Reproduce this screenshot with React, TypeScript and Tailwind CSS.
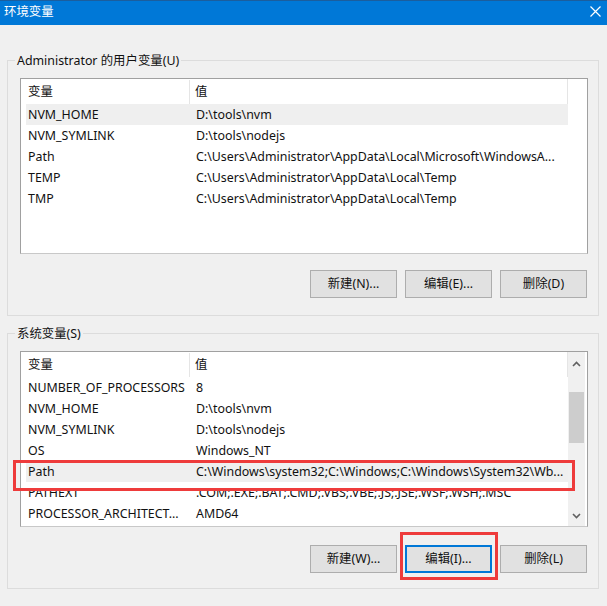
import { ReactNode } from "react";

type Row = { name: string; value: string; selected?: boolean };

const USER_VARS: Row[] = [
  { name: "NVM_HOME", value: "D:\\tools\\nvm", selected: true },
  { name: "NVM_SYMLINK", value: "D:\\tools\\nodejs" },
  { name: "Path", value: "C:\\Users\\Administrator\\AppData\\Local\\Microsoft\\WindowsA..." },
  { name: "TEMP", value: "C:\\Users\\Administrator\\AppData\\Local\\Temp" },
  { name: "TMP", value: "C:\\Users\\Administrator\\AppData\\Local\\Temp" },
];

const SYSTEM_VARS: Row[] = [
  { name: "NUMBER_OF_PROCESSORS", value: "8" },
  { name: "NVM_HOME", value: "D:\\tools\\nvm" },
  { name: "NVM_SYMLINK", value: "D:\\tools\\nodejs" },
  { name: "OS", value: "Windows_NT" },
  { name: "Path", value: "C:\\Windows\\system32;C:\\Windows;C:\\Windows\\System32\\Wb...", selected: true },
  { name: "PATHEXT", value: ".COM;.EXE;.BAT;.CMD;.VBS;.VBE;.JS;.JSE;.WSF;.WSH;.MSC" },
  { name: "PROCESSOR_ARCHITECT...", value: "AMD64" },
];

const FONT = "font-['Segoe_UI','Noto_Sans','Noto_Sans_CJK_SC',sans-serif]";

function GroupBox({ label, children }: { label: string; children: ReactNode }) {
  return (
    <div className="relative border border-[#dcdcdc] pl-[12px] pr-[10px] pt-[17px]">
      <span className="absolute left-[7px] top-[-9px] bg-[#f0f0f0] px-[2px] leading-[17px]">{label}</span>
      {children}
    </div>
  );
}

function VarList({ rows, scroll }: { rows: Row[]; scroll?: boolean }) {
  return (
    <div className="flex h-[176px] border border-[#a0a0a0] border-b-[#c8c8c8] bg-white">
      <div className="flex w-[547px] flex-col">
        <div className="flex h-[25px] shrink-0 items-center border-r border-[#e5e5e5] pt-[1px]">
          <div className="w-[169px] border-r border-[#e5e5e5] pl-[7px] leading-[24px]">变量</div>
          <div className="pl-[5px]">值</div>
        </div>
        {rows.map((r) => (
          <div
            key={r.name}
            className={
              "ml-[5px] flex h-[21px] shrink-0 items-center whitespace-nowrap pt-[1px] " +
              (r.selected ? "bg-[#efefef]" : "")
            }
          >
            <div className="w-[164px] overflow-hidden pl-[2px]">{r.name}</div>
            <div className="flex-1 overflow-hidden pl-[6px]">{r.value}</div>
          </div>
        ))}
      </div>
      {scroll ? (
        <div className="flex w-[17px] flex-col items-center bg-[#f0f0f0]">
          <div className="flex h-[24px] w-full items-center justify-center">
            <svg width="9" height="6" viewBox="0 0 9 6">
              <path d="M1 5 L4.5 1.5 L8 5" fill="none" stroke="#606060" strokeWidth="1.6" />
            </svg>
          </div>
          <div className="mt-[16px] h-[51px] w-[15px] bg-[#cdcdcd]" />
          <div className="flex-1" />
          <div className="flex h-[20px] w-full items-center justify-center">
            <svg width="9" height="6" viewBox="0 0 9 6">
              <path d="M1 1 L4.5 4.5 L8 1" fill="none" stroke="#606060" strokeWidth="1.6" />
            </svg>
          </div>
        </div>
      ) : (
        <div className="flex-1" />
      )}
    </div>
  );
}

function Btn({ children, focused }: { children: ReactNode; focused?: boolean }) {
  return (
    <div
      className={
        "flex h-[28px] w-[87px] items-center justify-center bg-[#e1e1e1] " +
        (focused ? "border-2 border-[#0078d7]" : "border border-[#adadad]")
      }
    >
      {children}
    </div>
  );
}

export default function App() {
  return (
    <div className={`relative h-[606px] w-[607px] overflow-hidden bg-[#f0f0f0] text-[12.4px] text-[#111] ${FONT}`}>
      <div className="flex h-[25px] items-center justify-between border-t border-[#1b5e9e] bg-[#0078d7] pb-[3px] pl-[4px] pr-[6px] text-white">
        <span className="leading-[17px]">环境变量</span>
        <svg width="11" height="11" viewBox="0 0 11 11">
          <path d="M0.5 0.5 L10.5 10.5 M10.5 0.5 L0.5 10.5" stroke="white" strokeWidth="1.2" />
        </svg>
      </div>

      <div className="flex flex-col gap-[17px] pl-[7px] pr-[8px] pt-[35px]">
        <GroupBox label="Administrator 的用户变量(U)">
          <VarList rows={USER_VARS} />
          <div className="mt-[16px] mb-[17px] flex justify-end gap-[8px] pr-[1px]">
            <Btn>新建(N)...</Btn>
            <Btn>编辑(E)...</Btn>
            <Btn>删除(D)</Btn>
          </div>
        </GroupBox>

        <GroupBox label="系统变量(S)">
          <VarList rows={SYSTEM_VARS} scroll />
          <div className="mt-[18px] mb-[15px] flex justify-end gap-[8px] pr-[1px]">
            <Btn>新建(W)...</Btn>
            <div className="relative">
              <Btn focused>编辑(I)...</Btn>
              <div className="absolute left-[-5px] top-[-13px] h-[48px] w-[98px] border-[3px] border-[#ee3b3b]" />
            </div>
            <Btn>删除(L)</Btn>
          </div>
        </GroupBox>
      </div>

      <div className="absolute left-[13px] top-[460px] h-[31px] w-[562px] border-[3px] border-[#ee3b3b]" />
    </div>
  );
}
